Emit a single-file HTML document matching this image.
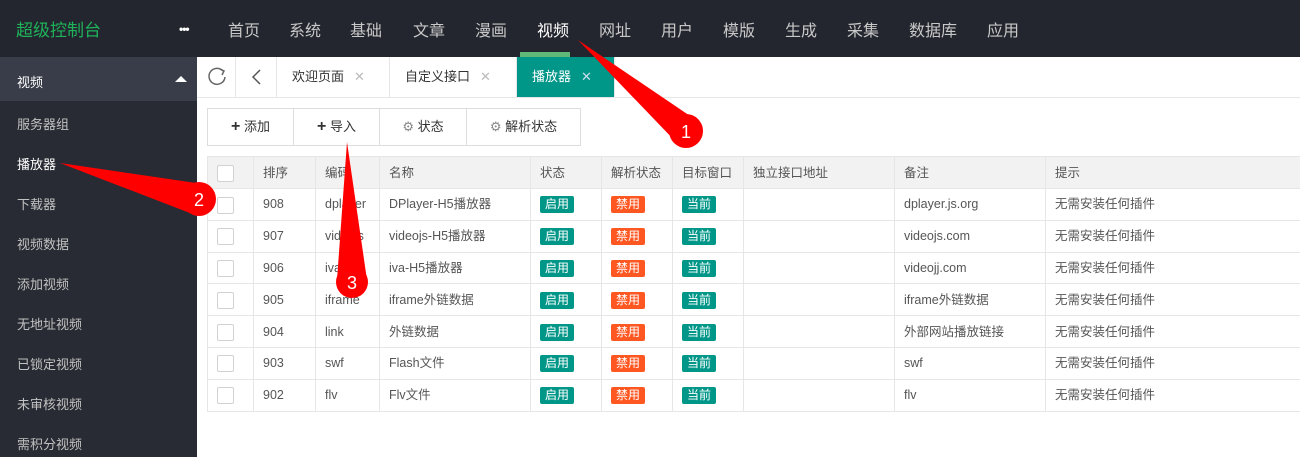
<!DOCTYPE html>
<html><head><meta charset="utf-8"><style>
*{margin:0;padding:0;box-sizing:border-box}
body{width:1300px;height:457px;overflow:hidden;background:#fff;font-family:"Liberation Sans","Noto Sans CJK SC",sans-serif;font-size:13px;color:#333;position:relative}
.top{position:absolute;left:0;top:0;width:1300px;height:57px;background:#23262e}
.logo{position:absolute;left:16px;top:16px;color:#1fb25a;font-size:17px}
.dots{position:absolute;left:179px;top:22px;color:#fff;font-size:12px;font-weight:bold;letter-spacing:-1px}
.nav{position:absolute;top:17px;color:#c8c8c8;font-size:16px}
.side{position:absolute;left:0;top:57px;width:197px;height:400px;background:#282b33}
.side .act{height:44px;background:#393d49;color:#fff;font-size:13px;padding:15px 0 0 17px;position:relative}
.side .it{position:absolute;left:17px;color:#c2c2c2;font-size:13px}
.tabs{position:absolute;left:197px;top:57px;width:1103px;height:41px;border-bottom:1px solid #e6e6e6;background:#fff}
.tab{position:absolute;top:0;height:40px;border-right:1px solid #e6e6e6;line-height:40px;font-size:13px;color:#333;white-space:nowrap}
.x{color:#bbb;margin-left:10px;font-size:13px}
.btns{position:absolute;left:207px;top:108px;height:38px;border:1px solid #ddd;display:flex}
.btns div{border-right:1px solid #ddd;line-height:36px;text-align:center;font-size:13px;color:#333;white-space:nowrap}
.btns div:last-child{border-right:none}
table{position:absolute;left:207px;top:156px;border-collapse:collapse;font-size:12.5px;color:#555;table-layout:fixed;width:1093px}
td{border:1px solid #e6e6e6;height:31.8px;padding:0 9px;white-space:nowrap;line-height:18px;vertical-align:middle;overflow:hidden}
tr.h td{background:#f2f2f2;height:32px}
.cb{display:inline-block;width:17px;height:17px;border:1px solid #d2d2d2;border-radius:2px;background:#fff;vertical-align:middle}
.g,.o{display:inline-block;color:#fff;font-size:12px;padding:0 5px;line-height:17px;border-radius:2px}
.g{background:#009688}.o{background:#ff5722}
</style></head><body>
<div class="top">
<div class="logo">超级控制台</div>
<div class="dots">•••</div>
<span class="nav" style="left:228px">首页</span>
<span class="nav" style="left:289px">系统</span>
<span class="nav" style="left:350px">基础</span>
<span class="nav" style="left:413px">文章</span>
<span class="nav" style="left:475px">漫画</span>
<span class="nav" style="left:537px;color:#fff">视频</span>
<span class="nav" style="left:599px">网址</span>
<span class="nav" style="left:661px">用户</span>
<span class="nav" style="left:723px">模版</span>
<span class="nav" style="left:785px">生成</span>
<span class="nav" style="left:847px">采集</span>
<span class="nav" style="left:909px">数据库</span>
<span class="nav" style="left:987px">应用</span>
<div style="position:absolute;left:520px;top:52px;width:50px;height:5px;background:#5fb878"></div>
</div>
<div class="side">
<div class="act">视频<span style="position:absolute;left:175px;top:19px;border-left:6px solid transparent;border-right:6px solid transparent;border-bottom:6px solid #fff"></span></div>
<span class="it" style="top:57px">服务器组</span>
<span class="it" style="top:97px;color:#fff">播放器</span>
<span class="it" style="top:137px">下载器</span>
<span class="it" style="top:177px">视频数据</span>
<span class="it" style="top:217px">添加视频</span>
<span class="it" style="top:257px">无地址视频</span>
<span class="it" style="top:297px">已锁定视频</span>
<span class="it" style="top:337px">未审核视频</span>
<span class="it" style="top:377px">需积分视频</span>
</div>
<div class="tabs">
<div class="tab" style="left:0;width:39px"><svg width="39" height="40"><path d="M26 14 A8 8 0 1 0 28 20" fill="none" stroke="#666" stroke-width="1.5"/><path d="M23 12 L27 14 L25 18" fill="none" stroke="#666" stroke-width="1.5"/></svg></div>
<div class="tab" style="left:39px;width:41px"><svg width="41" height="40"><path d="M24 13 L17 20 L24 27" fill="none" stroke="#555" stroke-width="1.5"/></svg></div>
<div class="tab" style="left:80px;width:113px;padding-left:15px">欢迎页面<span class="x">✕</span></div>
<div class="tab" style="left:193px;width:127px;padding-left:15px">自定义接口<span class="x">✕</span></div>
<div class="tab" style="left:320px;width:98px;padding-left:15px;background:#009688;color:#fff">播放器<span class="x" style="color:#cde">✕</span></div>
</div>
<div class="btns">
<div style="width:86px"><b style="font-size:16px">+</b> 添加</div>
<div style="width:86px"><b style="font-size:16px">+</b> 导入</div>
<div style="width:87px"><span style="color:#888">⚙</span> 状态</div>
<div style="width:113px"><span style="color:#888">⚙</span> 解析状态</div>
</div>
<table>
<colgroup><col style="width:46px"><col style="width:62px"><col style="width:64px"><col style="width:151px"><col style="width:71px"><col style="width:71px"><col style="width:71px"><col style="width:151px"><col style="width:151px"><col style="width:255px"></colgroup>
<tr class="h"><td><span class="cb"></span></td><td>排序</td><td>编码</td><td>名称</td><td>状态</td><td>解析状态</td><td>目标窗口</td><td>独立接口地址</td><td>备注</td><td>提示</td></tr>
<tr><td><span class="cb"></span></td><td>908</td><td>dplayer</td><td>DPlayer-H5播放器</td><td><span class="g">启用</span></td><td><span class="o">禁用</span></td><td><span class="g">当前</span></td><td></td><td>dplayer.js.org</td><td>无需安装任何插件</td></tr>
<tr><td><span class="cb"></span></td><td>907</td><td>videojs</td><td>videojs-H5播放器</td><td><span class="g">启用</span></td><td><span class="o">禁用</span></td><td><span class="g">当前</span></td><td></td><td>videojs.com</td><td>无需安装任何插件</td></tr>
<tr><td><span class="cb"></span></td><td>906</td><td>iva</td><td>iva-H5播放器</td><td><span class="g">启用</span></td><td><span class="o">禁用</span></td><td><span class="g">当前</span></td><td></td><td>videojj.com</td><td>无需安装任何插件</td></tr>
<tr><td><span class="cb"></span></td><td>905</td><td>iframe</td><td>iframe外链数据</td><td><span class="g">启用</span></td><td><span class="o">禁用</span></td><td><span class="g">当前</span></td><td></td><td>iframe外链数据</td><td>无需安装任何插件</td></tr>
<tr><td><span class="cb"></span></td><td>904</td><td>link</td><td>外链数据</td><td><span class="g">启用</span></td><td><span class="o">禁用</span></td><td><span class="g">当前</span></td><td></td><td>外部网站播放链接</td><td>无需安装任何插件</td></tr>
<tr><td><span class="cb"></span></td><td>903</td><td>swf</td><td>Flash文件</td><td><span class="g">启用</span></td><td><span class="o">禁用</span></td><td><span class="g">当前</span></td><td></td><td>swf</td><td>无需安装任何插件</td></tr>
<tr><td><span class="cb"></span></td><td>902</td><td>flv</td><td>Flv文件</td><td><span class="g">启用</span></td><td><span class="o">禁用</span></td><td><span class="g">当前</span></td><td></td><td>flv</td><td>无需安装任何插件</td></tr>
</table>
<svg width="1300" height="457" style="position:absolute;left:0;top:0" xmlns="http://www.w3.org/2000/svg">
<g fill="#f00">
<polygon points="578,40 677,143 696,120"/><circle cx="686" cy="131" r="17"/>
<polygon points="60,163 195,215 203,184"/><circle cx="199" cy="199" r="17"/>
<polygon points="347,142 337,280 367,280"/><circle cx="352" cy="282" r="16"/>
</g>
<g fill="#fff" font-family="Liberation Sans,sans-serif" font-size="18" text-anchor="middle">
<text x="686" y="138">1</text><text x="199" y="206">2</text><text x="352" y="289">3</text>
</g>
</svg>
</body></html>
